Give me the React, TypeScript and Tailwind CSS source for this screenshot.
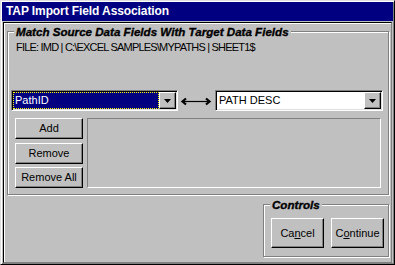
import React from "react";

const raised =
  "border border-t-white border-l-white border-r-black border-b-black shadow-[inset_-1px_-1px_#808080]";
const sunken =
  "border border-t-[#808080] border-l-[#808080] border-r-white border-b-white shadow-[inset_1px_1px_#000,inset_-1px_-1px_#dfdfdf]";
const etched =
  "border border-[#808080] shadow-[inset_1px_1px_#fff,1px_1px_#fff]";
const groupTitle =
  "-mt-[7px] ml-[6px] px-[2px] w-fit h-[13px] leading-[13px] bg-[#c0c0c0] font-bold italic text-[11.6px] text-black [-webkit-text-stroke:0.35px_#000]";

function DropButton() {
  return (
    <div className={`${raised} w-[17px] h-[17px] flex items-center justify-center bg-[#c0c0c0]`}>
      <svg width="7" height="4" viewBox="0 0 7 4">
        <path d="M0 0h7L3.5 4z" fill="#000" />
      </svg>
    </div>
  );
}

function Combo({ text, selected, width }: { text: string; selected?: boolean; width: string }) {
  return (
    <div className={`${sunken} ${width} h-[21px] p-[1px] flex bg-white`}>
      {selected ? (
        <div className="flex-1 bg-[#000080] border border-dotted border-[#ffff00] text-white pl-[1px] leading-[15px]">
          {text}
        </div>
      ) : (
        <div className="flex-1 text-black pl-[2px] leading-[17px]">{text}</div>
      )}
      <DropButton />
    </div>
  );
}

function Btn({ children, className }: { children: React.ReactNode; className: string }) {
  return (
    <div className={`${raised} ${className} bg-[#c0c0c0] flex items-center justify-center text-black`}>
      {children}
    </div>
  );
}

export default function App() {
  return (
    <div className="w-[395px] h-[265px] bg-[#c0c0c0] font-['Liberation_Sans',Arial,sans-serif] text-[11px] border border-t-[#dfdfdf] border-l-[#dfdfdf] border-r-black border-b-black shadow-[inset_1px_1px_#fff,inset_-1px_-1px_#808080] p-[1px] flex flex-col overflow-hidden">
      <div className="h-[19px] bg-[#000080] text-white font-bold text-[12px] tracking-[-0.1px] leading-[19px] pl-[4px]">
        TAP Import Field Association
      </div>
      <div className="mt-[1px] mx-[1px] flex-1 border border-t-black border-l-black border-r-[#808080] border-b-[#808080] shadow-[inset_1px_1px_#fff] flex flex-col">
        <div className={`${etched} ml-[3px] mt-[8px] w-[382px] h-[164px] flex flex-col`}>
          <span className={groupTitle}>Match Source Data Fields With Target Data Fields</span>
          <div className="mt-[3px] ml-[8px] leading-[13px] tracking-[-0.8px] text-black">
            FILE: IMD | C:\EXCEL SAMPLES\MYPATHS | SHEET1$
          </div>
          <div className="mt-[36px] ml-[3px] flex items-start">
            <Combo text="PathID" selected width="w-[167px]" />
            <svg width="37" height="21" viewBox="0 0 37 21">
              <path d="M8 8.5 L4.5 11.5 L8 14.5" fill="none" stroke="#000" strokeWidth="2.2" />
              <path d="M6 11.5 H30" stroke="#000" strokeWidth="1.2" />
              <path d="M28 8.5 L31.5 11.5 L28 14.5" fill="none" stroke="#000" strokeWidth="2.2" />
            </svg>
            <Combo text="PATH DESC" width="w-[168px]" />
          </div>
          <div className="mt-[7px] ml-[7px] flex items-start">
            <div className="w-[68px] flex flex-col">
              <Btn className="h-[21px]">Add</Btn>
              <Btn className="h-[21px] mt-[4px]">Remove</Btn>
              <Btn className="h-[21px] mt-[3px]">Remove All</Btn>
            </div>
            <div className="ml-[4px] w-[294px] h-[70px] border border-t-[#808080] border-l-[#808080] border-r-white border-b-white" />
          </div>
        </div>
        <div className={`${etched} ml-[259px] mt-[9px] w-[126px] h-[53px] flex flex-col`}>
          <span className={groupTitle}>Controls</span>
          <div className="mt-[7px] ml-[7px] flex gap-[7px]">
            <Btn className="w-[53px] h-[30px]">
              Ca<span className="underline">n</span>cel
            </Btn>
            <Btn className="w-[53px] h-[30px]">
              C<span className="underline">o</span>ntinue
            </Btn>
          </div>
        </div>
      </div>
    </div>
  );
}
